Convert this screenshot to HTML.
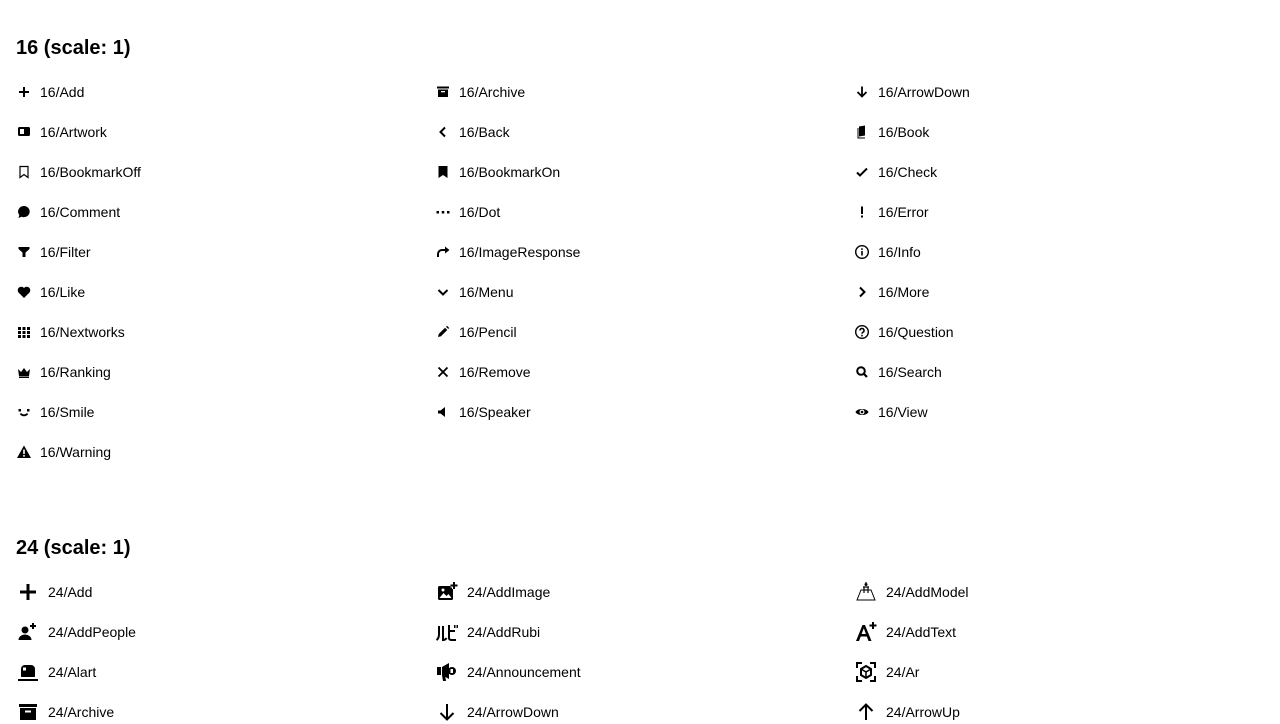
<!DOCTYPE html>
<html><head><meta charset="utf-8"><style>
body{margin:0;width:1280px;height:720px;overflow:hidden;background:#fff;font-family:"Liberation Sans",Arial,sans-serif;color:#000;position:relative}
h2{position:absolute;left:16px;margin:0;font-size:20px;font-weight:bold;line-height:24px}
.r{position:absolute;height:24px;display:flex;align-items:center;font-size:14px}
.r svg{flex:none}
.s .r svg{width:16px;height:16px;margin-right:8px}
.b .r svg{width:24px;height:24px;margin-right:8px}
</style></head><body>
<h2 style="top:36px">16 (scale: 1)</h2>
<div class="s">
<div class="r" style="left:16px;top:80px"><svg viewBox="0 0 16 16"><path d="M7 3h2v4h4v2H9v4H7V9H3V7h4z"/></svg>16/Add</div>
<div class="r" style="left:16px;top:120px"><svg viewBox="0 0 16 16"><rect x="2" y="3" width="12" height="9" rx="1.5"/><rect x="4" y="5" width="4" height="5" fill="#fff"/></svg>16/Artwork</div>
<div class="r" style="left:16px;top:160px"><svg viewBox="0 0 16 16"><path d="M4 2.5h8v11l-4-3-4 3z" fill="none" stroke="#000" stroke-width="1.2"/></svg>16/BookmarkOff</div>
<div class="r" style="left:16px;top:200px"><svg viewBox="0 0 16 16"><path d="M8 2a6 5.6 0 1 1-2.5 10.8L2.5 14l.8-3A6 5.6 0 0 1 8 2z"/></svg>16/Comment</div>
<div class="r" style="left:16px;top:240px"><svg viewBox="0 0 16 16"><path d="M2.5 3h11v2L9.5 8.5V13h-3V8.5L2.5 5z"/></svg>16/Filter</div>
<div class="r" style="left:16px;top:280px"><svg viewBox="0 0 16 16"><path d="M8 14L2.5 8.5A3.2 3.2 0 0 1 8 4a3.2 3.2 0 0 1 5.5 4.5z"/></svg>16/Like</div>
<div class="r" style="left:16px;top:320px"><svg viewBox="0 0 16 16"><g><rect x="2" y="3" width="3" height="3"/><rect x="6.5" y="3" width="3" height="3"/><rect x="11" y="3" width="3" height="3"/><rect x="2" y="7" width="3" height="3"/><rect x="6.5" y="7" width="3" height="3"/><rect x="11" y="7" width="3" height="3"/><rect x="2" y="11" width="3" height="3"/><rect x="6.5" y="11" width="3" height="3"/><rect x="11" y="11" width="3" height="3"/></g></svg>16/Nextworks</div>
<div class="r" style="left:16px;top:360px"><svg viewBox="0 0 16 16"><path d="M2 5l3 3 3-4 3 4 3-3-1 7H3z"/><rect x="3" y="12.5" width="10" height="1.5"/></svg>16/Ranking</div>
<div class="r" style="left:16px;top:400px"><svg viewBox="0 0 16 16"><rect x="2.5" y="5" width="2.5" height="2.5"/><rect x="11" y="5" width="2.5" height="2.5"/><path d="M4.5 9.5a4 3.5 0 0 0 7 0" fill="none" stroke="#000" stroke-width="1.8"/></svg>16/Smile</div>
<div class="r" style="left:16px;top:440px"><svg viewBox="0 0 16 16"><path d="M8 1.5L15 14H1z"/><rect x="7.2" y="5.5" width="1.6" height="4.5" fill="#fff"/><rect x="7.2" y="11" width="1.6" height="1.6" fill="#fff"/></svg>16/Warning</div>

<div class="r" style="left:435px;top:80px"><svg viewBox="0 0 16 16"><rect x="2" y="2.5" width="12" height="2"/><path d="M3 5.5h10V13H3z"/><rect x="6" y="7" width="4" height="1.3" fill="#fff"/></svg>16/Archive</div>
<div class="r" style="left:435px;top:120px"><svg viewBox="0 0 16 16"><path d="M10 3.5L5.5 8l4.5 4.5" fill="none" stroke="#000" stroke-width="2"/></svg>16/Back</div>
<div class="r" style="left:435px;top:160px"><svg viewBox="0 0 16 16"><path d="M3.5 2h9v12l-4.5-3-4.5 3z"/></svg>16/BookmarkOn</div>
<div class="r" style="left:435px;top:200px"><svg viewBox="0 0 16 16"><rect x="1.5" y="7" width="2.5" height="2.5"/><rect x="6.75" y="7" width="2.5" height="2.5"/><rect x="12" y="7" width="2.5" height="2.5"/></svg>16/Dot</div>
<div class="r" style="left:435px;top:240px"><svg viewBox="0 0 16 16"><path d="M3 13V10a4 4 0 0 1 4-4h6" fill="none" stroke="#000" stroke-width="2"/><path d="M10 2.5L14.5 6 10 9.5z"/></svg>16/ImageResponse</div>
<div class="r" style="left:435px;top:280px"><svg viewBox="0 0 16 16"><path d="M3.5 6l4.5 4.5 4.5-4.5" fill="none" stroke="#000" stroke-width="2"/></svg>16/Menu</div>
<div class="r" style="left:435px;top:320px"><svg viewBox="0 0 16 16"><path d="M3 13l.7-3L10 3.7l2.3 2.3L6 12.3z"/><path d="M11 2.8l1-1 2.2 2.2-1 1z"/></svg>16/Pencil</div>
<div class="r" style="left:435px;top:360px"><svg viewBox="0 0 16 16"><path d="M3.5 3.5l9 9M12.5 3.5l-9 9" stroke="#000" stroke-width="1.8"/></svg>16/Remove</div>
<div class="r" style="left:435px;top:400px"><svg viewBox="0 0 16 16"><path d="M3 6.5h2.5L10 3v10L5.5 9.5H3z"/></svg>16/Speaker</div>

<div class="r" style="left:854px;top:80px"><svg viewBox="0 0 16 16"><path d="M8 2.5v10M3.5 8l4.5 4.5L12.5 8" fill="none" stroke="#000" stroke-width="1.8"/></svg>16/ArrowDown</div>
<div class="r" style="left:854px;top:120px"><svg viewBox="0 0 16 16"><path d="M5 2.5l6-1v10l-6 1z"/><path d="M4 4v10h7" fill="none" stroke="#000" stroke-width="1"/></svg>16/Book</div>
<div class="r" style="left:854px;top:160px"><svg viewBox="0 0 16 16"><path d="M3 8.5l3 3 7-7" fill="none" stroke="#000" stroke-width="2"/></svg>16/Check</div>
<div class="r" style="left:854px;top:200px"><svg viewBox="0 0 16 16"><rect x="7" y="2.5" width="2" height="7.5"/><rect x="7" y="11.5" width="2" height="2"/></svg>16/Error</div>
<div class="r" style="left:854px;top:240px"><svg viewBox="0 0 16 16"><circle cx="8" cy="8" r="6.3" fill="none" stroke="#000" stroke-width="1.4"/><rect x="7.2" y="7" width="1.6" height="4.5"/><rect x="7.2" y="4.3" width="1.6" height="1.6"/></svg>16/Info</div>
<div class="r" style="left:854px;top:280px"><svg viewBox="0 0 16 16"><path d="M6 3.5L10.5 8 6 12.5" fill="none" stroke="#000" stroke-width="2"/></svg>16/More</div>
<div class="r" style="left:854px;top:320px"><svg viewBox="0 0 16 16"><circle cx="8" cy="8" r="6.3" fill="none" stroke="#000" stroke-width="1.4"/><path d="M6 6.5a2 2 0 1 1 2.8 1.8c-.6.3-.8.7-.8 1.5" fill="none" stroke="#000" stroke-width="1.5"/><rect x="7.2" y="10.8" width="1.6" height="1.6"/></svg>16/Question</div>
<div class="r" style="left:854px;top:360px"><svg viewBox="0 0 16 16"><circle cx="7" cy="7" r="3.8" fill="none" stroke="#000" stroke-width="2"/><path d="M9.5 9.5l3.5 3.5" stroke="#000" stroke-width="2.2"/></svg>16/Search</div>
<div class="r" style="left:854px;top:400px"><svg viewBox="0 0 16 16"><path d="M1.5 8C3.5 4 12.5 4 14.5 8 12.5 12 3.5 12 1.5 8z"/><circle cx="8" cy="8" r="2.5" fill="#fff"/><circle cx="8" cy="8" r="1.3"/></svg>16/View</div>
</div>

<h2 style="top:536px">24 (scale: 1)</h2>
<div class="b">
<div class="r" style="left:16px;top:580px"><svg viewBox="0 0 24 24"><path d="M10.5 4h3v6.5H20v3h-6.5V20h-3v-6.5H4v-3h6.5z"/></svg>24/Add</div>
<div class="r" style="left:16px;top:620px"><svg viewBox="0 0 24 24"><circle cx="9" cy="10" r="3.5"/><path d="M2.5 20a6.5 5.5 0 0 1 13 0z"/><path d="M17 3v6M14 6h6" stroke="#000" stroke-width="2"/></svg>24/AddPeople</div>
<div class="r" style="left:16px;top:660px"><svg viewBox="0 0 24 24"><path d="M5 17V9a4 4 0 0 1 4-4h6a4 4 0 0 1 4 4v8z"/><rect x="7" y="7.5" width="3" height="3" fill="#fff"/><rect x="2" y="19" width="20" height="2"/></svg>24/Alart</div>
<div class="r" style="left:16px;top:700px"><svg viewBox="0 0 24 24"><rect x="3" y="4" width="18" height="3"/><path d="M4 8h16v12H4z"/><rect x="9" y="10.5" width="6" height="2" fill="#fff"/></svg>24/Archive</div>

<div class="r" style="left:435px;top:580px"><svg viewBox="0 0 24 24"><rect x="3" y="6" width="15" height="14" rx="1.5"/><path d="M4.5 18l4-5 3 3 2-2 3 4z" fill="#fff"/><circle cx="8" cy="10" r="1.5" fill="#fff"/><path d="M19 2v7M15.5 5.5h7" stroke="#fff" stroke-width="4"/><path d="M19 2v7M15.5 5.5h7" stroke="#000" stroke-width="2"/></svg>24/AddImage</div>
<div class="r" style="left:435px;top:620px"><svg viewBox="0 0 24 24"><path d="M4 6v8c0 3-1 5-2.5 6M8 6v14c2 0 3-1 3.5-2" fill="none" stroke="#000" stroke-width="2"/><path d="M14 5v13c0 1.5 1 2 3 2h4M14 11h6" fill="none" stroke="#000" stroke-width="2"/><rect x="19" y="5" width="1.5" height="3"/><rect x="21.5" y="5" width="1.5" height="3"/></svg>24/AddRubi</div>
<div class="r" style="left:435px;top:660px"><svg viewBox="0 0 24 24"><rect x="2" y="7" width="4" height="8"/><path d="M7 7l7-4v16l-7-4z"/><path d="M7 15l1 6h3l-1-6z"/><circle cx="17" cy="11" r="4"/><rect x="15.5" y="9" width="2.5" height="4" fill="#fff"/></svg>24/Announcement</div>
<div class="r" style="left:435px;top:700px"><svg viewBox="0 0 24 24"><path d="M12 4v15M5.5 13l6.5 6.5 6.5-6.5" fill="none" stroke="#000" stroke-width="2"/></svg>24/ArrowDown</div>

<div class="r" style="left:854px;top:580px"><svg viewBox="0 0 24 24"><path d="M3 20l4-10h10l4 10z" fill="none" stroke="#000" stroke-width="1"/><circle cx="12" cy="4.5" r="1.5"/><path d="M12 2v1M9 7h6M10 7v6M14 7v6M11 10h2" stroke="#000" stroke-width="1.2"/></svg>24/AddModel</div>
<div class="r" style="left:854px;top:620px"><svg viewBox="0 0 24 24"><path d="M2 21L8.5 5h2.5L17.5 21h-3l-1.7-4.5H6.7L5 21zM7.6 14h4.3L9.8 8.3z"/><path d="M19 2v7M15.5 5.5h7" stroke="#000" stroke-width="2"/></svg>24/AddText</div>
<div class="r" style="left:854px;top:660px"><svg viewBox="0 0 24 24"><path d="M3 8V3h5M16 3h5v5M21 16v5h-5M8 21H3v-5" fill="none" stroke="#000" stroke-width="2"/><path d="M12 6l5 3v6l-5 3-5-3V9z" fill="none" stroke="#000" stroke-width="2"/><path d="M7 9l5 3 5-3M12 12v6" fill="none" stroke="#000" stroke-width="1.5"/></svg>24/Ar</div>
<div class="r" style="left:854px;top:700px"><svg viewBox="0 0 24 24"><path d="M12 20V5M5.5 11L12 4.5l6.5 6.5" fill="none" stroke="#000" stroke-width="2"/></svg>24/ArrowUp</div>
</div>
</body></html>
